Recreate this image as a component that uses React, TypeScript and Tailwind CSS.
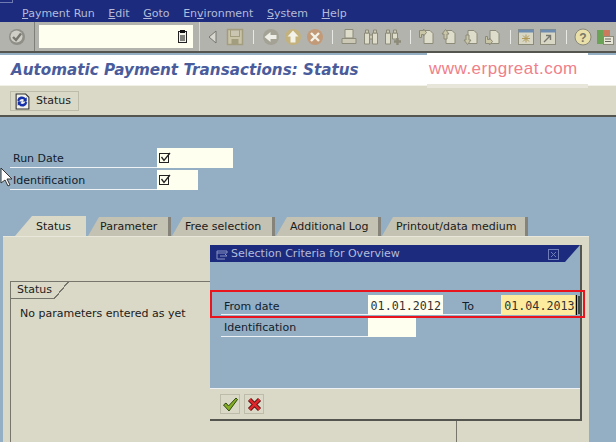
const sapFont = "font-['DejaVu_Sans',_'Liberation_Sans',_sans-serif]";

const Sep = ({ w = 'w-3' }: { w?: string }) => (
  <div className={`${w} h-5 flex items-center justify-center shrink-0`}>
    <div className="w-px h-[14px] bg-[#e8e8e4]" />
  </div>
);

const Icon = ({ children, w = 'w-[22px]' }: { children: React.ReactNode; w?: string }) => (
  <div className={`${w} h-5 flex items-center justify-center shrink-0`}>
    <svg width="18" height="18" viewBox="0 0 18 18" fill="none">
      {children}
    </svg>
  </div>
);

const pageIcon = 'M6 2.500h6l3 3v10H6z';
const line = '#8c8a78';
const fill = '#dedcca';
const arrow = '#c9c6a8';

const Toolbar = () => (
  <div className="h-[31px] bg-[#b3b3ae] border-b-2 border-[#55554f] flex items-center">
    <div className="w-[36px] h-full flex items-center justify-center border-r border-[#7f7f7a]">
      <svg width="18" height="18" viewBox="0 0 18 18">
        <circle cx="9" cy="9" r="8" fill="#8f8f88" />
        <circle cx="8.500" cy="8.500" r="6" fill="#cfcfc8" />
        <path d="M5 9l3 3 5-6.500" stroke="#77776f" strokeWidth="2.400" fill="none" />
      </svg>
    </div>
    <div className="w-[156px] h-[23px] ml-[4px] mb-px bg-[#fffff0] flex items-center justify-end pr-[5px]">
      <svg width="10" height="13" viewBox="0 0 10 13">
        <rect x="0.500" y="1.500" width="8" height="11" fill="#f4f4ea" stroke="#222" />
        <rect x="2" y="0" width="5" height="3" fill="#111" />
        <path d="M2 6h5M2 8h5M2 10h5" stroke="#111" />
      </svg>
    </div>
    <div className="w-[7px] h-full border-r border-[#d8d8d2] mr-[2px]" />
    <Icon>
      <path d="M12 3v12L5 9z" fill="#d8d8d0" stroke="#77776f" />
    </Icon>
    <Icon>
      <rect x="1.500" y="1.500" width="15" height="15" fill="#c9c4a8" stroke="#a39d80" strokeWidth="1.500" />
      <rect x="4.500" y="2" width="9" height="6.500" fill="#c9c5b0" stroke="#a39d80" />
      <rect x="5.500" y="11" width="7" height="5" fill="#a39d80" />
    </Icon>
    <Sep w="w-[14px]" />
    <Icon>
      <circle cx="9" cy="9" r="8" fill="#a3a294" />
      <path d="M2.500 9l6-5v3h6v4h-6v3z" fill="#efefe8" />
    </Icon>
    <Icon>
      <circle cx="9" cy="9" r="8" fill="#c4b27c" />
      <path d="M9 2.500l5.500 6h-3v6h-5v-6h-3z" fill="#f3f2e8" />
    </Icon>
    <Icon>
      <circle cx="9" cy="9" r="8" fill="#c29a78" />
      <path d="M5 5l8 8M13 5l-8 8" stroke="#f3f2e8" strokeWidth="2.400" />
    </Icon>
    <Sep />
    <Icon>
      <path d="M5 1.500h8v8.500H5z" fill={fill} stroke={line} />
      <path d="M2 10.500h14v5H2z" fill="#cbc9b6" stroke={line} />
    </Icon>
    <Icon>
      <path d="M2.500 5h5v11h-5zM10.500 5h5v11h-5z" fill={fill} stroke={line} />
      <path d="M3.500 2h3v3h-3zM11.500 2h3v3h-3zM7.500 7h3v4h-3z" fill="#cbc9b6" stroke={line} />
    </Icon>
    <Icon>
      <path d="M1.500 5h5v11h-5zM8.500 5h5v6h-5z" fill={fill} stroke={line} />
      <path d="M2.500 2h3v3h-3zM9.500 2h3v3h-3z" fill="#cbc9b6" stroke={line} />
      <path d="M13.500 10v7M10 13.500h7" stroke="#8c8a78" strokeWidth="2.400" />
    </Icon>
    <Sep />
    <Icon>
      <path d={pageIcon} fill={fill} stroke={line} />
      <path d="M1.500 2.500h4l0-1.500 3 3.500-3 3.500V6.500H3.500v3h-2z" fill={arrow} stroke={line} />
    </Icon>
    <Icon>
      <path d={pageIcon} fill={fill} stroke={line} />
      <path d="M5.500 1.500L2 6h2v5h3V6h2z" fill={arrow} stroke={line} />
    </Icon>
    <Icon>
      <path d={pageIcon} fill={fill} stroke={line} />
      <path d="M5.500 16.500L2 12h2V7h3v5h2z" fill={arrow} stroke={line} />
    </Icon>
    <Icon>
      <path d={pageIcon} fill={fill} stroke={line} />
      <path d="M1.500 15.500h4l0 1.500 3-3.500-3-3.500v1.500H3.500v-3h-2z" fill={arrow} stroke={line} />
    </Icon>
    <Sep />
    <Icon w="w-5">
      <rect x="1.500" y="1.500" width="15" height="15" fill="#d8d6c4" stroke={line} />
      <rect x="1.500" y="1.500" width="15" height="3" fill="#6d8cb0" />
      <path d="M9 6.500v8M5 10.500h8M6 7.500l6 6M12 7.500l-6 6" stroke="#b49a58" />
    </Icon>
    <Icon w="w-6">
      <rect x="1.500" y="1.500" width="15" height="15" fill="#d8d6c4" stroke={line} />
      <rect x="1.500" y="1.500" width="15" height="3" fill="#6d8cb0" />
      <path d="M5 14l6-6M7 7.500h4.500V12" stroke="#77776f" strokeWidth="1.400" />
    </Icon>
    <Sep />
    <Icon>
      <circle cx="9" cy="9" r="8" fill="#e9dfa8" stroke="#88887c" />
      <text x="9" y="13.500" textAnchor="middle" fontSize="12" fontWeight="700" fill="#77776a" fontFamily="Liberation Sans">?</text>
    </Icon>
    <Icon>
      <rect x="1" y="2" width="6" height="14" fill="#6aa356" />
      <rect x="7" y="2" width="7" height="6" fill="#cc7a5e" />
      <rect x="7.500" y="8.500" width="10" height="8" fill="#e8e6d6" stroke={line} />
      <path d="M9 11h6M9 13.500h6" stroke="#66665c" />
    </Icon>
  </div>
);

const Field = ({ label, width, check }: { label: string; width: string; check?: boolean }) => (
  <div className="h-[22px] flex items-start">
    <div className="w-[147px] h-[20px] border-b border-[#eef2f5] pl-[3px] leading-[22px] text-[#10202c]">{label}</div>
    <div className={`${width} h-[20px] bg-[#fffff0] flex items-center pl-[2px]`}>
      {check && (
        <svg width="12" height="12" viewBox="0 0 12 12" fill="none">
          <rect x="0.500" y="1.500" width="9" height="9" stroke="#222" />
          <path d="M2.500 5l2.500 3.500 6-7.500" stroke="#222" strokeWidth="1.300" />
        </svg>
      )}
    </div>
  </div>
);

const Tab = ({ label, active, width, pad }: { label: string; active?: boolean; width: string; pad: string }) => (
  <div
    className={`${width} ${pad} h-[20px] pt-[2px] flex items-center ${
      active
        ? 'bg-[#dad8c7] [clip-path:polygon(17px_0,100%_0,100%_100%,0_100%)]'
        : 'bg-[#c4c2b2] border-r-[3px] border-[#85837a] [clip-path:polygon(11px_1px,100%_1px,100%_100%,0_100%)]'
    }`}
  >
    <span className="text-[#1a1a1a] whitespace-nowrap">{label}</span>
  </div>
);

export default function App() {
  return (
    <div className={`relative w-[616px] h-[442px] overflow-hidden bg-[#94afc3] text-[11px] ${sapFont}`}>
      {/* menu */}
      <div className="h-[22px] bg-[#1c2b7d] flex items-center pl-[22px] pt-[6px] gap-[13.600px] text-[#b4bbd9]">
        <span><u>P</u>ayment Run</span>
        <span><u>E</u>dit</span>
        <span><u>G</u>oto</span>
        <span>En<u>v</u>ironment</span>
        <span><u>S</u>ystem</span>
        <span><u>H</u>elp</span>
      </div>
      <div className="absolute left-0 top-0 w-[13px] h-[3px] border-b border-r border-[#6f7ab0]" />
      <Toolbar />
      {/* title */}
      <div className="h-[31px] mt-[2px] bg-white border-b border-[#f2f1e8] pl-[11px] flex items-center text-[15.200px] font-bold italic text-[#4a5c9c]">
        Automatic Payment Transactions: Status
      </div>
      {/* application toolbar */}
      <div className="h-[31px] bg-[#dad8c7] border-b-2 border-[#55554f] pl-[10px] pt-[5px]">
        <div className="w-[69px] h-[20px] border border-[#bdbbaa] bg-[#dad8c7] flex items-center gap-[5px] pl-[3px] text-[#222]">
          <svg width="17" height="17" viewBox="0 0 16 16">
            <path d="M2 1h9l3 3v11H2z" fill="#f2f2ea" stroke="#333" />
            <path d="M3 7a4.500 4.500 0 018-2l1-1v4H8l1.500-1.300A2.500 2.500 0 005 8zM12.500 9a4.500 4.500 0 01-8 2l-1 1V8h4L6 9.300A2.500 2.500 0 0010.500 8z" fill="#1530a8" />
          </svg>
          Status
        </div>
      </div>
      {/* selection fields */}
      <div className="mt-[31px] pl-[10px]">
        <Field label="Run Date" width="w-[76px]" check />
        <Field label="Identification" width="w-[41px]" check />
      </div>
      {/* tabs */}
      <div className="mt-[24px] ml-[15px] flex items-end h-[20px]">
        <Tab label="Status" active width="w-[71px]" pad="pl-[21px]" />
        <div className="w-[2px]" />
        <Tab label="Parameter" width="w-[83px]" pad="pl-[12px]" />
        <div className="w-[1px]" />
        <Tab label="Free selection" width="w-[103px]" pad="pl-[13px]" />
        <div className="w-[1px]" />
        <Tab label="Additional Log" width="w-[105px]" pad="pl-[14px]" />
        <div className="w-[1px]" />
        <Tab label="Printout/data medium" width="w-[146px]" pad="pl-[14px]" />
      </div>
      {/* tab body */}
      <div className="ml-[3px] w-[586px] h-[206px] bg-[#dad8c7] border-t border-[#e8e7da] pt-[44px] pl-[7px]">
        <div className="relative w-[447px] h-[162px] border-t border-l border-r border-[#77766c]">
          <div className="w-[44px] h-[17px] pl-[6px] leading-[16px] text-[#222] border-b border-[#77766c]">Status</div>
          <div className="absolute left-[43px] -top-px w-[15px] h-[18px] bg-[linear-gradient(to_top_left,transparent_47%,#77766c_47%,#77766c_53%,transparent_53%)]" />
          <div className="pl-[9px] pt-[7px] text-[#1a1a1a]">No parameters entered as yet</div>
        </div>
      </div>

      {/* popup */}
      <div className="absolute left-[210px] top-[245px] w-[372px] h-[176px] bg-[#94afc3] border-b-2 border-r-2 border-[#55554f] flex flex-col">
        <div className="h-[17px] pt-[2px] bg-[#1c2b7d] flex items-center pl-[6px] gap-[2px] text-[#b4bbd9] [clip-path:polygon(0_0,100%_0,calc(100%-15px)_100%,0_100%)]">
          <svg width="13" height="12" viewBox="0 0 13 12" fill="none" stroke="#8893c4">
            <path d="M1 2h10v2H1zM1 4v6h8M4 7h7l-2-2" />
          </svg>
          Selection Criteria for Overview
          <svg className="ml-auto mr-[21px]" width="11" height="11" viewBox="0 0 11 11" fill="none" stroke="#6f7db8">
            <rect x="0.500" y="0.500" width="10" height="10" />
            <path d="M3 3l5 5M8 3l-5 5" />
          </svg>
        </div>
        <div className="flex-1 pl-[11px] pt-[33px]">
          <div className="h-[22px] flex items-start">
            <div className="w-[147px] h-[20px] border-b border-[#eef2f5] pl-[3px] leading-[24px] text-[#10202c]">From date</div>
            <div className="w-[76px] h-[20px] bg-[#fffff0] pl-[3px] leading-[22px] text-[#333] font-['DejaVu_Sans_Mono',_monospace] text-[11.700px]">01.01.2012</div>
            <div className="w-[58px] h-[20px] border-b border-[#eef2f5] pl-[19px] leading-[24px] text-[#10202c]">To</div>
            <div className="w-[74px] h-[20px] bg-[#fdec9e] pl-[3px] leading-[22px] text-[#333] font-['DejaVu_Sans_Mono',_monospace] text-[11.700px] whitespace-nowrap">01.04.2013</div>
            <div className="w-px h-[20px] ml-[1px] bg-black" />
            <div className="w-[2px] h-[18px] mt-px ml-px bg-[#3a4a44]" />
          </div>
          <div className="h-[22px] flex items-start">
            <div className="w-[147px] h-[20px] border-b border-[#eef2f5] pl-[3px] leading-[22px] text-[#10202c]">Identification</div>
            <div className="w-[48px] h-[20px] bg-[#fffff0]" />
          </div>
        </div>
        <div className="h-[31px] bg-[#dad8c7] border-t border-[#eef2f5] flex items-center pl-[10px] gap-[4px]">
          <div className="w-[20px] h-[20px] border border-[#bdbbaa] flex items-center justify-center">
            <svg width="17" height="17" viewBox="0 0 17 17">
              <path d="M1.500 9l2.500-2 2.500 3L14 2l1.500 1.500L7 15z" fill="#84ad24" stroke="#2c4a10" />
            </svg>
          </div>
          <div className="w-[20px] h-[20px] border border-[#bdbbaa] flex items-center justify-center">
            <svg width="15" height="15" viewBox="0 0 15 15">
              <path d="M2.500 2.500l10 10M12.500 2.500l-10 10" stroke="#4a1010" strokeWidth="4.400" />
              <path d="M2.500 2.500l10 10M12.500 2.500l-10 10" stroke="#e0262a" strokeWidth="2.600" />
            </svg>
          </div>
        </div>
      </div>
      {/* red marker */}
      <div className="absolute left-[210px] top-[290px] w-[375px] h-[28px] border-2 border-[#e8141e]" />
      {/* watermark */}
      <div className="absolute left-[427px] top-[53px] w-[161px] h-[35px] bg-white border-b-[4px] border-[#e8e6da] pl-[2px] pt-[3px] text-[17px] tracking-[0.500px] text-[#f0808a] font-['Liberation_Sans',_sans-serif]">
        www.erpgreat.com
      </div>
      {/* mouse cursor */}
      <svg className="absolute left-0 top-[167px]" width="13" height="20" viewBox="0 0 13 20">
        <path d="M1 1v15l4-3 3 6 2-1-3-6h5z" fill="#fff" stroke="#333" />
      </svg>
    </div>
  );
}
